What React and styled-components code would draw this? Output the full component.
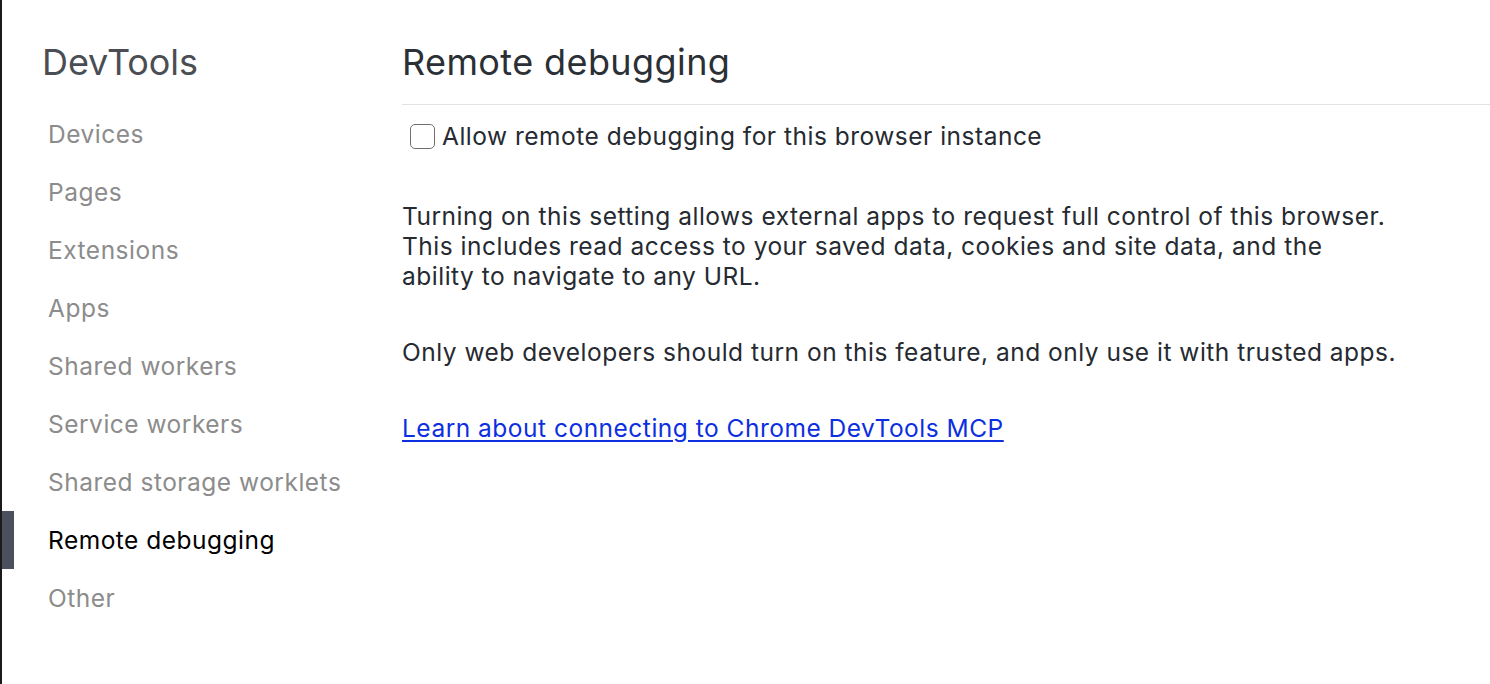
import React, { useState } from "react";
import styled, { createGlobalStyle } from "styled-components";

const Global = createGlobalStyle`
  html, body { margin: 0; padding: 0; background: #ffffff; }
  body { font-family: Inter, "Noto Sans", "Liberation Sans", sans-serif; -webkit-font-smoothing: antialiased; }
  * { box-sizing: border-box; }
`;

const Page = styled.div`
  display: flex;
  min-height: 684px;
  border-left: 2px solid #1b1b1b;
`;

const Sidebar = styled.nav`
  width: 400px;
  flex-shrink: 0;
  padding-top: 40px;
  display: flex;
  flex-direction: column;
`;

const Brand = styled.h1`
  margin: 0 0 21px 40px;
  font-size: 36px;
  line-height: 44px;
  font-weight: 400;
  color: #4a4e54;
  letter-spacing: -0.1px;
`;

const NavItem = styled.div`
  height: 58px;
  display: flex;
  align-items: center;
  border-left: 12px solid ${(p) => (p.$active ? "#4a515c" : "transparent")};
  padding-left: 34px;
  font-size: 24.5px;
  color: ${(p) => (p.$active ? "#000000" : "#8c8c8c")};
  letter-spacing: 0.5px;
  cursor: pointer;
`;

const Main = styled.main`
  flex: 1;
  padding-top: 40px;
  display: flex;
  flex-direction: column;
`;

const Header = styled.h2`
  margin: 0;
  padding: 0 0 20px 0;
  font-size: 36px;
  line-height: 44px;
  font-weight: 400;
  color: #2b2f36;
  letter-spacing: 0.4px;
  border-bottom: 1px solid #e3e3e3;
`;

const Section = styled.section`
  padding-top: 16px;
  display: flex;
  flex-direction: column;
  gap: 46px;
  color: #262a31;
  font-size: 24.5px;
  line-height: 30px;
  letter-spacing: 0.5px;
`;

const CheckRow = styled.label`
  display: flex;
  align-items: center;
  gap: 7px;
  padding-left: 8px;
  margin-bottom: 4px;
  cursor: pointer;
`;

const Box = styled.span`
  width: 25px;
  height: 25px;
  border: 1.5px solid #6f6f6f;
  border-radius: 5px;
  background: ${(p) => (p.$on ? "#1a73e8" : "#fff")};
  flex-shrink: 0;
`;

const Para = styled.p`
  margin: 0;
  max-width: 1000px;
`;

const Link = styled.a`
  color: #0d2fe0;
  text-decoration: underline;
  text-underline-offset: 3px;
  text-decoration-thickness: 1.5px;
`;

const items = [
  "Devices",
  "Pages",
  "Extensions",
  "Apps",
  "Shared workers",
  "Service workers",
  "Shared storage worklets",
  "Remote debugging",
  "Other",
];

export default function App() {
  const [on, setOn] = useState(false);
  return (
    <>
      <Global />
      <Page>
        <Sidebar>
          <Brand>DevTools</Brand>
          {items.map((it) => (
            <NavItem key={it} $active={it === "Remote debugging"}>
              {it}
            </NavItem>
          ))}
        </Sidebar>
        <Main>
          <Header>Remote debugging</Header>
          <Section>
            <CheckRow onClick={() => setOn(!on)}>
              <Box $on={on} />
              Allow remote debugging for this browser instance
            </CheckRow>
            <Para>
              Turning on this setting allows external apps to request full control of this browser.
              <br />
              This includes read access to your saved data, cookies and site data, and the
              <br />
              ability to navigate to any URL.
            </Para>
            <Para>
              Only web developers should turn on this feature, and only use it with trusted apps.
            </Para>
            <Para>
              <Link href="#">Learn about connecting to Chrome DevTools MCP</Link>
            </Para>
          </Section>
        </Main>
      </Page>
    </>
  );
}
